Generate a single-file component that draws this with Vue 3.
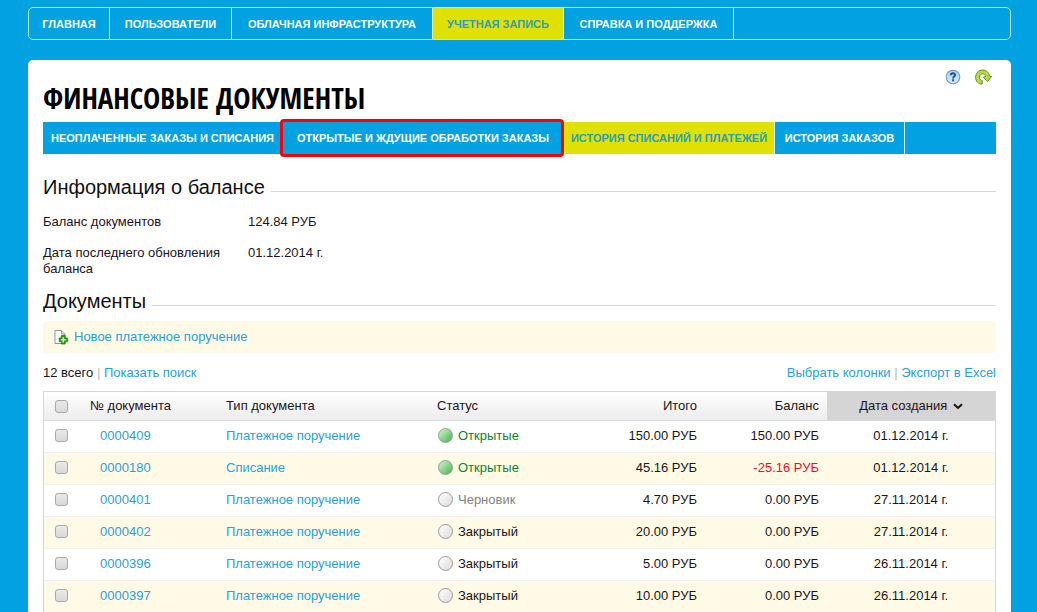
<script setup>
import { ref } from 'vue'

const menu = [
  { label: 'Главная', cls: 'home' },
  { label: 'Пользователи', cls: 'users' },
  { label: 'Облачная инфраструктура', cls: 'cloud' },
  { label: 'Учетная запись', cls: 'account active' },
  { label: 'Справка и поддержка', cls: 'support' },
]

const tabs = [
  { label: 'Неоплаченные заказы и списания', cls: 'unpaid' },
  { label: 'Открытые и ждущие обработки заказы', cls: 'pending marked' },
  { label: 'История списаний и платежей', cls: 'history active' },
  { label: 'История заказов', cls: 'orders' },
]

const rows = ref([
  { id: '0000409', type: 'Платежное поручение', status: 'Открытые', state: 'open', total: '150.00', balance: '150.00', date: '01.12.2014' },
  { id: '0000180', type: 'Списание', status: 'Открытые', state: 'open', total: '45.16', balance: '-25.16', date: '01.12.2014' },
  { id: '0000401', type: 'Платежное поручение', status: 'Черновик', state: 'draft', total: '4.70', balance: '0.00', date: '27.11.2014' },
  { id: '0000402', type: 'Платежное поручение', status: 'Закрытый', state: 'closed', total: '20.00', balance: '0.00', date: '27.11.2014' },
  { id: '0000396', type: 'Платежное поручение', status: 'Закрытый', state: 'closed', total: '5.00', balance: '0.00', date: '26.11.2014' },
  { id: '0000397', type: 'Платежное поручение', status: 'Закрытый', state: 'closed', total: '10.00', balance: '0.00', date: '26.11.2014' },
])
</script>

<template>
  <div class="page">
    <nav class="menu">
      <a v-for="m in menu" :key="m.label" href="#" :class="m.cls">{{ m.label }}</a>
    </nav>

    <main class="panel">
      <header class="head">
        <h1>Финансовые документы</h1>
        <div class="tools">
          <button type="button" aria-label="Справка">
            <svg width="16" height="16" viewBox="0 0 16 16">
              <defs>
                <linearGradient id="help" x1="0" y1="0" x2="0" y2="1">
                  <stop offset="0" stop-color="#a9cdee" />
                  <stop offset="1" stop-color="#d3f0fd" />
                </linearGradient>
              </defs>
              <circle cx="8" cy="8" r="6.8" fill="url(#help)" stroke="#6b9ac6" stroke-width="1.1" />
              <path d="M5.8 6.2C5.9 3.6 10.2 3.7 10.1 6.1C10 7.5 8.1 7.5 8.1 9.4" fill="none" stroke="#1f4f91" stroke-width="1.9" />
              <rect x="7.1" y="10.3" width="2" height="2" fill="#1f4f91" />
            </svg>
          </button>
          <button type="button" aria-label="Обновить">
            <svg width="17" height="16" viewBox="0 0 17 16">
              <path d="M7 15.2C3.2 14.9 .6 12 .6 8.3C.6 4.2 3.8 1 7.8 1C11.6 1 14.2 3.7 14.5 7.4H16.5L12.6 12.6L8.3 8.3L10.5 7.6C10.2 5.8 9.2 4.8 7.8 4.8C5.9 4.8 4.5 6.3 4.5 8.3C4.5 10 5.5 11.2 7.4 11.7Z" fill="#b4dc46" stroke="#668c2c" stroke-width="1" stroke-linejoin="round" />
            </svg>
          </button>
        </div>
      </header>

      <nav class="tabs">
        <a v-for="t in tabs" :key="t.label" href="#" :class="t.cls">{{ t.label }}</a>
      </nav>

      <h2><span>Информация о балансе</span></h2>
      <dl>
        <dt>Баланс документов</dt>
        <dd>124.84 РУБ</dd>
        <dt>Дата последнего обновления баланса</dt>
        <dd>01.12.2014 г.</dd>
      </dl>

      <h2 class="docs"><span>Документы</span></h2>
      <div class="actions">
        <a href="#">
          <svg width="16" height="16" viewBox="0 0 16 16">
            <path d="M2 1.5H8.5L12 5V14.5H2Z" fill="#fff" stroke="#8b99a8" />
            <path d="M8.5 1.5V5H12" fill="#e4eaf0" stroke="#8b99a8" />
            <path d="M8.3 6.6H12.1V9H14.6V12.6H12.1V15H8.3V12.6H6.2V9H8.3Z" fill="#28a51d" stroke="#167c12" stroke-width=".8" stroke-linejoin="round" />
            <path d="M10.3 8.2V13.4M7.8 10.8H13" stroke="#c7f7a6" stroke-width="1.5" />
          </svg>
          <span>Новое платежное поручение</span>
        </a>
      </div>

      <div class="bar">
        <div>12 всего <i>|</i> <a href="#">Показать поиск</a></div>
        <div><a href="#">Выбрать колонки</a> <i>|</i> <a href="#">Экспорт в Excel</a></div>
      </div>

      <table>
        <colgroup>
          <col class="c-check"><col class="c-id"><col class="c-type"><col>
          <col class="c-total"><col class="c-balance"><col class="c-date">
        </colgroup>
        <thead>
          <tr>
            <th><input type="checkbox" aria-label="Выбрать все"></th>
            <th>№ документа</th>
            <th>Тип документа</th>
            <th>Статус</th>
            <th class="num">Итого</th>
            <th class="num">Баланс</th>
            <th class="date sorted">
              Дата создания
              <svg width="10" height="7" viewBox="0 0 10 7"><path d="M1 1.3L5 5L9 1.3" fill="none" stroke="#111" stroke-width="2" /></svg>
            </th>
          </tr>
        </thead>
        <tbody>
          <tr v-for="r in rows" :key="r.id">
            <td><input type="checkbox" :aria-label="r.id"></td>
            <td class="id"><a href="#">{{ r.id }}</a></td>
            <td><a href="#">{{ r.type }}</a></td>
            <td><span class="status" :class="r.state"><b></b>{{ r.status }}</span></td>
            <td class="num">{{ r.total }} РУБ</td>
            <td class="num" :class="{ debt: r.balance.startsWith('-') }">{{ r.balance }} РУБ</td>
            <td class="date">{{ r.date }} г.</td>
          </tr>
        </tbody>
      </table>
    </main>
  </div>
</template>

<style>
html,
body {
  margin: 0;
  background: #02a1e1;
}
</style>

<style scoped>
.page {
  padding: 7px 26px 0 28px;
  font-family: "Liberation Sans", Arial, sans-serif;
  font-size: 13px;
  line-height: 16px;
  color: #1c1420;
}
a {
  color: #2a9fd9;
  text-decoration: none;
}
.menu,
.tabs {
  display: flex;
  font-size: 11px;
  font-weight: bold;
  text-transform: uppercase;
  white-space: nowrap;
}
.menu a,
.tabs a {
  display: flex;
  align-items: center;
  justify-content: center;
  box-sizing: border-box;
  flex: none;
  color: #fff;
  border-right: 1px solid #d5effa;
}
.menu {
  box-sizing: border-box;
  height: 33px;
  border: 1px solid #b5e3f6;
  border-radius: 5px;
}
.menu .home { width: 81px; }
.menu .users { width: 122px; }
.menu .cloud { width: 201px; }
.menu .account { width: 131px; }
.menu .support { width: 170px; }
.menu .active,
.tabs .active {
  background: #e0e102;
  color: #2a9fb8;
}
.panel {
  margin-top: 20px;
  padding: 9px 15px 0;
  background: #fff;
  border-radius: 5px 5px 0 0;
}
.head {
  display: flex;
  justify-content: space-between;
  height: 53px;
}
h1 {
  margin: 9px 0 0;
  font: bold 29px/40px "Liberation Sans Narrow", "Open Sans Condensed", "Liberation Sans", sans-serif;
  color: #000;
  text-transform: uppercase;
  white-space: nowrap;
}
.tools {
  display: flex;
  align-items: flex-start;
  gap: 14px;
  padding-right: 4px;
}
button {
  padding: 0;
  border: 0;
  background: none;
}
svg {
  display: block;
}
.tabs {
  height: 32px;
  background: #02a1e1;
}
.tabs .unpaid { width: 240px; }
.tabs .pending { width: 281px; }
.tabs .history { width: 211px; }
.tabs .orders { width: 130px; }
.marked {
  position: relative;
}
.marked::after {
  content: "";
  position: absolute;
  inset: -3px -1px -3px -3px;
  border: 3px solid #fb0007;
  border-radius: 4px;
}
h2 {
  display: flex;
  align-items: center;
  gap: 6px;
  margin: 21px 0 0;
  font-size: 20px;
  font-weight: normal;
  line-height: 24px;
  color: #111;
}
h2::after {
  content: "";
  flex: 1;
  height: 1px;
  margin-top: 8px;
  background: #d3d6d8;
}
dl {
  display: grid;
  grid-template-columns: 185px 1fr;
  gap: 15px 20px;
  margin: 15px 0 0;
}
dd {
  margin: 0;
}
h2.docs {
  margin-top: 12px;
}
.actions {
  margin-top: 8px;
  padding: 8px 10px;
  background: #fefae6;
  border-radius: 4px;
}
.actions a {
  display: flex;
  gap: 5px;
}
.bar {
  display: flex;
  justify-content: space-between;
  padding: 12px 0 10px;
}
i {
  color: #bbb;
  font-style: normal;
}
table {
  width: 100%;
  table-layout: fixed;
  border-collapse: separate;
  border-spacing: 0;
  border: 1px solid #cfd8dc;
  border-bottom: 0;
}
.c-check { width: 36px; }
.c-id { width: 136px; }
.c-type { width: 211px; }
.c-total { width: 139px; }
.c-balance { width: 122px; }
.c-date { width: 168px; }
th,
td {
  box-sizing: border-box;
  padding: 0 0 0 10px;
  text-align: left;
  font-weight: normal;
  border-bottom: 1px solid #f0f1f4;
}
th {
  height: 29px;
  background: linear-gradient(#fff, #ececec);
  border-bottom-color: #d5dcdf;
}
td {
  height: 32px;
  padding-bottom: 2px;
}
tbody tr:nth-child(even) {
  background: #fefae6;
}
.id {
  padding-left: 20px;
}
.num {
  padding-left: 0;
  padding-right: 8px;
  text-align: right;
}
.date {
  padding-left: 0;
  text-align: center;
}
.sorted {
  background: #d5d5d5;
}
.sorted svg {
  display: inline-block;
  margin-left: 2px;
}
.debt {
  color: #fa0a1e;
}
input {
  display: block;
  appearance: none;
  box-sizing: border-box;
  width: 13px;
  height: 13px;
  margin: 0 0 0 1px;
  border: 1px solid #a9a9a9;
  border-radius: 3px;
  background: linear-gradient(#e9e9e9, #d9d9d9);
}
.status {
  display: flex;
  align-items: center;
  gap: 5px;
}
.status b {
  box-sizing: border-box;
  width: 15px;
  height: 15px;
  margin-left: 1px;
  border: 1px solid #999;
  border-radius: 50%;
  background: linear-gradient(135deg, #fff, #dcdcdc);
}
.open { color: #17802a; }
.open b { background: linear-gradient(135deg, #d8f5d6, #3fb544); }
.draft { color: #828282; }
</style>
